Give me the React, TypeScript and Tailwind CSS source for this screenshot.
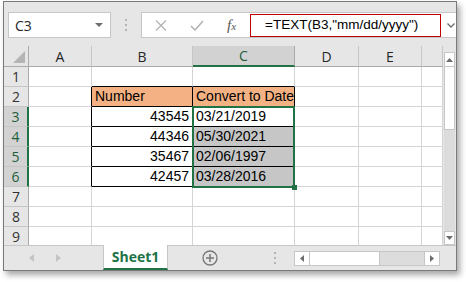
import React from "react"

const F_UI = "font-['Open_Sans',sans-serif]"
const F_CELL = "font-['Liberation_Sans',Arial,sans-serif]"

// column widths (px), line sits on the last pixel of each
const cols = [
  { key: "A", w: "w-[63px]" },
  { key: "B", w: "w-[101px]" },
  { key: "C", w: "w-[102px]" },
  { key: "D", w: "w-[64px]" },
  { key: "E", w: "w-[63px]" },
  { key: "", w: "w-[21px]" },
]

type Cell = { text?: string; align?: "left" | "right"; fill?: string }

const data: Record<number, Record<string, Cell>> = {
  2: {
    B: { text: "Number", fill: "bg-[#f4b183]" },
    C: { text: "Convert to Date", fill: "bg-[#f4b183]" },
  },
  3: { B: { text: "43545", align: "right" }, C: { text: "03/21/2019" } },
  4: { B: { text: "44346", align: "right" }, C: { text: "05/30/2021", fill: "bg-[#c6c6c6]" } },
  5: { B: { text: "35467", align: "right" }, C: { text: "02/06/1997", fill: "bg-[#c6c6c6]" } },
  6: { B: { text: "42457", align: "right" }, C: { text: "03/28/2016", fill: "bg-[#c6c6c6]" } },
}

const inTable = (r: number, c: string) => r >= 2 && r <= 6 && (c === "B" || c === "C")

function GridCell({ row, col, w, last }: { row: number; col: string; w: string; last: boolean }) {
  const cell = data[row]?.[col]
  const rightBlack = inTable(row, col) || (col === "A" && row >= 2 && row <= 6)
  const bottomBlack = inTable(row, col) || (row === 1 && (col === "B" || col === "C"))
  return (
    <div
      className={`${w} shrink-0 h-full border-r border-b flex items-end pb-px px-[3px] overflow-hidden whitespace-nowrap text-[14px] leading-[17px] text-black ${F_CELL} ${
        rightBlack ? "border-r-black" : last ? "border-r-[#d4d4d4]" : "border-r-[#d4d4d4]"
      } ${bottomBlack ? "border-b-black" : "border-b-[#d4d4d4]"} ${cell?.fill ?? "bg-white"} ${
        cell?.align === "right" ? "justify-end" : "justify-start"
      }`}
    >
      {cell?.text}
    </div>
  )
}

function Row({ n, h }: { n: number; h: string }) {
  const sel = n >= 3 && n <= 6
  return (
    <div className={`flex ${h}`}>
      <div
        className={`w-[25px] shrink-0 flex items-center justify-center border-b border-b-[#c6c6c6] text-[14px] ${F_UI} ${
          sel
            ? "bg-[#d2d2d2] border-r-2 border-r-[#217346] text-[#1e5f3a]"
            : "bg-[#e6e6e6] border-r border-r-[#ababab] text-[#333]"
        }`}
      >
        {n}
      </div>
      {cols.map((c, i) => (
        <GridCell key={i} row={n} col={c.key} w={c.w} last={i === cols.length - 1} />
      ))}
    </div>
  )
}

export default function App() {
  const rows = [1, 2, 3, 4, 5, 6, 7, 8]
  return (
    <div className="w-[466px] h-[282px] bg-white overflow-hidden pt-px pl-[3px]">
      <div className="w-[454px] h-[270px] border border-[#7a7a7a] bg-[#e6e6e6] flex flex-col shadow-[3px_4px_6px_rgba(0,0,0,0.35)]">
        {/* formula bar */}
        <div className="h-[44px] shrink-0 flex items-start pt-[10px] pl-[4px]">
          <div className="w-[103px] h-[26px] bg-white border border-[#c6c6c6] flex items-center justify-between pl-[6px] pr-[7px]">
            <span className={`text-[14px] text-[#262626] ${F_UI}`}>C3</span>
            <svg width="8" height="4" viewBox="0 0 8 4">
              <polygon points="0,0 8,0 4,4" fill="#6d6d6d" />
            </svg>
          </div>
          <div className="w-[30px] h-[26px] flex flex-col items-center justify-center gap-[3px]">
            <span className="w-[2px] h-[2px] bg-[#b4b4b4]" />
            <span className="w-[2px] h-[2px] bg-[#b4b4b4]" />
            <span className="w-[2px] h-[2px] bg-[#b4b4b4]" />
          </div>
          <div className="flex-1 h-[26px] bg-white border border-[#c6c6c6] border-r-0 flex items-center">
            <div className="w-[108px] shrink-0 flex items-center pl-[13px]">
              <svg width="12" height="11" viewBox="0 0 12 11" className="shrink-0">
                <path d="M1 0.5 L11 10.5 M11 0.5 L1 10.5" stroke="#b4b4b4" strokeWidth="1.3" fill="none" />
              </svg>
              <svg width="14" height="11" viewBox="0 0 14 11" className="ml-[23px] shrink-0">
                <path d="M1 6 L5 10 L13 1" stroke="#b4b4b4" strokeWidth="1.6" fill="none" />
              </svg>
              <span className="ml-[23px] italic text-[15px] text-[#555] font-['Liberation_Serif',serif] leading-none">
                f<span className="text-[11px]">x</span>
              </span>
            </div>
            <div className="w-[191px] h-[23px] shrink-0 border border-[#c00000] flex items-center pl-[14px]">
              <span className={`text-[13.5px] text-black whitespace-nowrap ${F_CELL}`}>=TEXT(B3,"mm/dd/yyyy")</span>
            </div>
            <svg width="8" height="5" viewBox="0 0 8 5" className="ml-[6px]">
              <path d="M0.5 0.5 L4 4 L7.5 0.5" stroke="#6d6d6d" strokeWidth="1.4" fill="none" />
            </svg>
          </div>
        </div>

        {/* grid + vertical scrollbar */}
        <div className="flex h-[199px] shrink-0 overflow-hidden">
          <div className="relative flex flex-col w-[439px] shrink-0 bg-white">
            {/* column headers */}
            <div className={`flex h-[21px] shrink-0 bg-[#e6e6e6] text-[14px] ${F_UI}`}>
              <div className="w-[25px] shrink-0 border-r border-b border-[#ababab] flex items-end justify-end p-[3px]">
                <svg width="12" height="12" viewBox="0 0 12 12">
                  <polygon points="12,0 12,12 0,12" fill="#b4b4b4" />
                </svg>
              </div>
              {cols.map((c, i) =>
                c.key === "C" ? (
                  <div
                    key={i}
                    className={`${c.w} shrink-0 bg-[#d2d2d2] border-r border-r-[#ababab] border-b-2 border-b-[#217346] flex items-center justify-center text-[#1e5f3a]`}
                  >
                    {c.key}
                  </div>
                ) : (
                  <div
                    key={i}
                    className={`${c.w} shrink-0 border-r border-b border-[#c6c6c6] border-b-[#ababab] flex items-center justify-center text-[#262626]`}
                  >
                    {c.key}
                  </div>
                )
              )}
            </div>
            {rows.map((n) => (
              <Row key={n} n={n} h="h-[20px] shrink-0" />
            ))}
            <Row n={9} h="h-[20px] shrink-0" />

            {/* selection C3:C6 */}
            <div className="absolute left-[188px] top-[60px] w-[103px] h-[82px] border-2 border-[#217346] pointer-events-none" />
            <div className="absolute left-[288px] top-[139px] w-[5px] h-[5px] bg-[#217346]" />
          </div>

          {/* vertical scrollbar */}
          <div className="flex-1 flex flex-col pt-[6px] pl-[1px] pr-[1px]">
            <div className="h-[15px] bg-white border border-[#c6c6c6] flex items-center justify-center">
              <svg width="7" height="4" viewBox="0 0 7 4">
                <polygon points="0,4 7,4 3.5,0" fill="#6d6d6d" />
              </svg>
            </div>
            <div className="h-[63px] bg-white border-x border-b border-[#c6c6c6]" />
            <div className="flex-1 bg-[#dcdcdc]" />
            <div className="h-[14px] bg-white border border-[#c6c6c6] flex items-center justify-center">
              <svg width="7" height="4" viewBox="0 0 7 4">
                <polygon points="0,0 7,0 3.5,4" fill="#6d6d6d" />
              </svg>
            </div>
          </div>
        </div>

        {/* sheet tabs bar */}
        <div className="flex-1 flex items-stretch border-t border-[#c6c6c6]">
          <div className="w-[99px] shrink-0 flex items-center pl-[25px] gap-[22px]">
            <svg width="5" height="8" viewBox="0 0 5 8">
              <polygon points="5,0 5,8 0,4" fill="#c4c4c4" />
            </svg>
            <svg width="5" height="8" viewBox="0 0 5 8">
              <polygon points="0,0 0,8 5,4" fill="#c4c4c4" />
            </svg>
          </div>
          <div className="w-[65px] shrink-0 bg-white border-x border-[#c6c6c6] border-b-2 border-b-[#217346] -mt-px flex items-center justify-center">
            <span className={`text-[14px] font-bold text-[#217346] ${F_UI}`}>Sheet1</span>
          </div>
          <div className="w-[84px] shrink-0 flex items-center pl-[34px]">
            <svg width="16" height="16" viewBox="0 0 16 16">
              <circle cx="8" cy="8" r="7" fill="none" stroke="#767676" strokeWidth="1.3" />
              <path d="M8 4 V12 M4 8 H12" stroke="#767676" strokeWidth="1.5" />
            </svg>
          </div>
          <div className="w-[42px] shrink-0 flex flex-col items-center justify-center gap-[3px] pl-[4px]">
            <span className="w-[2px] h-[2px] bg-[#b4b4b4]" />
            <span className="w-[2px] h-[2px] bg-[#b4b4b4]" />
            <span className="w-[2px] h-[2px] bg-[#b4b4b4]" />
          </div>
          <div className="flex items-center">
            <div className="w-[146px] h-[15px] flex border border-[#c6c6c6] bg-[#dcdcdc]">
              <div className="w-[15px] h-full bg-white border-r border-[#c6c6c6] flex items-center justify-center">
                <svg width="4" height="7" viewBox="0 0 4 7">
                  <polygon points="4,0 4,7 0,3.5" fill="#6d6d6d" />
                </svg>
              </div>
              <div className="w-[70px] h-full bg-white border-r border-[#c6c6c6]" />
              <div className="flex-1" />
              <div className="w-[15px] h-full bg-white border-l border-[#c6c6c6] flex items-center justify-center">
                <svg width="4" height="7" viewBox="0 0 4 7">
                  <polygon points="0,0 0,7 4,3.5" fill="#6d6d6d" />
                </svg>
              </div>
            </div>
          </div>
        </div>
      </div>
    </div>
  )
}
